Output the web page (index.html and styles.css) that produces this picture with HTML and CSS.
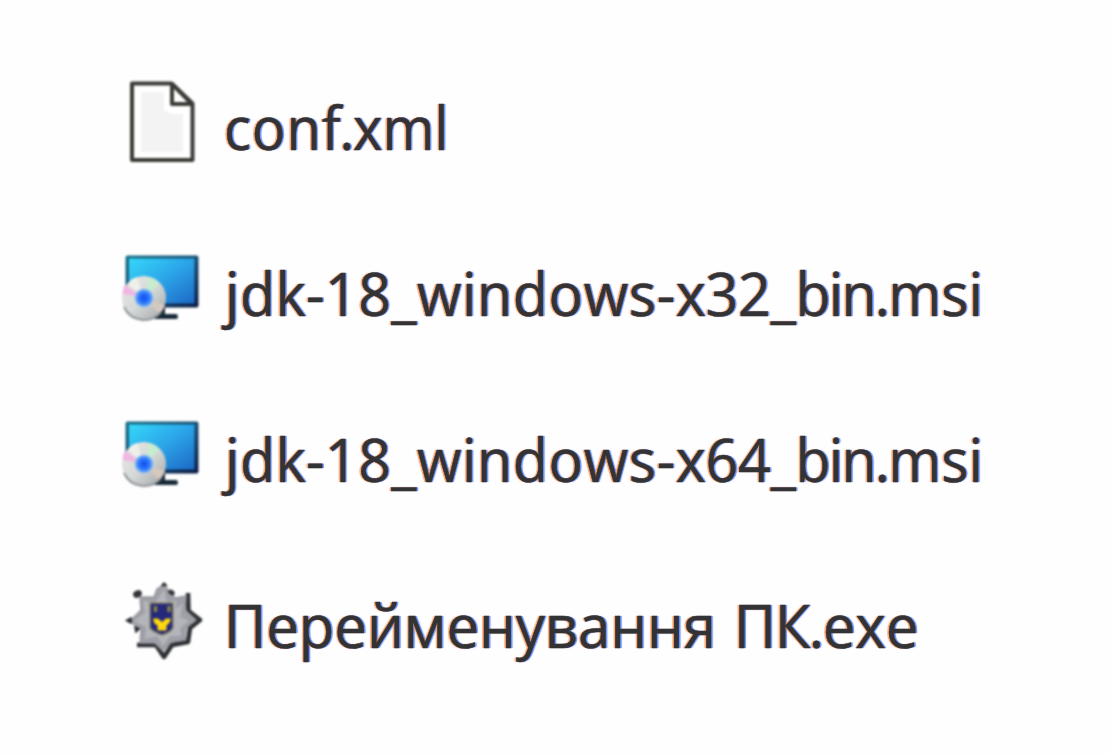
FILE: index.html
```html
<!DOCTYPE html>
<html lang="uk">
<head>
<meta charset="utf-8">
<title>Files</title>
<link rel="stylesheet" href="styles.css">
</head>
<body>
<svg class="defs" width="0" height="0" aria-hidden="true">
  <defs>
    <linearGradient id="screen" x1="0" y1="0" x2="1" y2="1">
      <stop offset="0" stop-color="#35d8fa"/><stop offset=".5" stop-color="#2ba4e8"/><stop offset="1" stop-color="#1d68c6"/>
    </linearGradient>
    <linearGradient id="frame" x1="0" y1="0" x2="1" y2="1">
      <stop offset="0" stop-color="#1c7288"/><stop offset=".5" stop-color="#174f74"/><stop offset="1" stop-color="#0c1a42"/>
    </linearGradient>
    <linearGradient id="disc" x1="0" y1="0" x2="1" y2="1">
      <stop offset="0" stop-color="#e9e9e3"/><stop offset=".5" stop-color="#d5d9d8"/><stop offset="1" stop-color="#a3a5a5"/>
    </linearGradient>
    <radialGradient id="hub">
      <stop offset="0" stop-color="#1450ee"/><stop offset=".4" stop-color="#2068fa"/><stop offset=".75" stop-color="#4a94fa"/><stop offset="1" stop-color="#a9cdec"/>
    </radialGradient>
    <symbol id="installer" viewBox="0 0 100 85">
      <rect x="15.500" y="10.500" width="73" height="52" rx="2" fill="url(#frame)"/>
      <rect x="19" y="13.500" width="65.500" height="45" fill="url(#screen)"/>
      <path d="M50 61h5v8h11q2 0 2 2.500t-2 2.500H44z" fill="#182a38"/>
      <circle cx="34" cy="53" r="22" fill="url(#disc)"/>
      <path d="M34 53 13 49q-1-5 2-9z" fill="#f0b7e3"/>
      <path d="M34 53 39 32q8 2 10 7z" fill="#c7ecd0"/>
      <path d="M34 53 49 69q4-3 6-9z" fill="#d5c8bf"/>
      <path d="M34 53 27 32q-7 2-9 7z" fill="#f0f0ea"/>
      <path d="M14 62a22 22 0 0 0 37 5" fill="none" stroke="#92979a" stroke-width="2"/>
      <circle cx="34" cy="53" r="9.500" fill="url(#hub)"/>
    </symbol>
  </defs>
</svg>
<ul class="files">
  <li class="file">
    <svg class="icon" viewBox="0 0 100 100">
      <path d="M22 12.500H61.500L82.500 32.500V89H22z" fill="#fff" stroke="#3b3a36" stroke-width="4" stroke-linejoin="round"/>
      <path d="M31 21H54V39L62 43H73V81H31z" fill="#f3f3f3"/>
      <path d="M62 13V33H82z" fill="#fff" stroke="#3b3a36" stroke-width="4" stroke-linejoin="round"/>
    </svg>
    <span class="name name-conf"><span class="base">con</span><span class="dot">f.</span>xml</span>
  </li>
  <li class="file">
    <svg class="icon installer"><use href="#installer"/></svg>
    <span class="name name-jdk"><span class="stem">jdk-18_</span><span class="platform">windows-</span><span class="arch">x32_</span><span class="suffix">bin.</span>msi</span>
  </li>
  <li class="file">
    <svg class="icon installer"><use href="#installer"/></svg>
    <span class="name name-jdk"><span class="stem">jdk-18_</span><span class="platform">windows-</span><span class="arch">x64_</span><span class="suffix">bin.</span>msi</span>
  </li>
  <li class="file">
    <svg class="icon badge" viewBox="0 0 100 100">
      <path d="M78 24 78.500 42 90 51 80 59 78 73 62 76 54 88 46 76 27 76" fill="none" stroke="#2e2f33" stroke-width="4.500" stroke-linejoin="round"/>
      <path d="M54 16 60 23 65 29 76 27 75 41 86 51 76 59 75 71 61 73 53 82 45 74 30 74 31 61 20 52 31 41 30 28 44 28 47 20z" fill="#9fa0a7" stroke="#9698a0" stroke-width="1.500" stroke-linejoin="round"/>
      <path d="M54 20 57 34 66 31 66 40 73 34 70 48 79 52 70 59 71 67 60 67 53 77 47 67 35 70 36 58 24 52 35 44 33 32 45 34z" fill="#b4b5bb"/>
      <ellipse cx="27.500" cy="25" rx="4.500" ry="3.500" fill="#333438" transform="rotate(-25 27.500 25)"/>
      <ellipse cx="61.500" cy="23.500" rx="3.500" ry="2.500" fill="#37373a" transform="rotate(35 61.500 23.500)"/>
      <path d="M51.500 17 54 14 57 17M16.500 51.500l4.500-2.500v5zM25 58l4 2-3 3z" fill="#27282c" stroke="#27282c" stroke-width="1.500"/>
      <path d="M40 34H63V59Q60 64 52 66 43 63 40 59z" fill="#25297c" stroke="#8c8765" stroke-width="1.500"/>
      <path d="M45.500 37v6M59 37v6" stroke="#8a823c" stroke-width="3.500"/>
      <path d="M43.500 50H48L52 53.500 56 50H60.500L58.500 54.500 56 56V61H48V56L45 54.500z" fill="#ffd80e" stroke="#ffd80e"/>
    </svg>
    <span class="name name-exe"><span class="first">Перейменування </span><span class="second">ПК.</span>exe</span>
  </li>
</ul>
</body>
</html>
```
FILE: styles.css
```css
body {
  margin: 0;
  background: #fefefe;
}

.defs {
  position: absolute;
}

.files {
  margin: 0;
  padding: 46px 0 0 109.5px;
  list-style: none;
}

.file {
  display: flex;
  align-items: center;
  gap: 12px;
  height: 166px;
}

.icon {
  flex: none;
  width: 100px;
  height: 100px;
  margin-top: -16px;
  filter: blur(0.8px);
}

.installer {
  height: 85px;
  margin-top: -15px;
}

.name {
  margin-top: -5px;
  color: #333335;
  font: 400 61px/83px "Open Sans", "Noto Sans", sans-serif;
  white-space: pre;
  transform-origin: left center;
  -webkit-text-stroke: 0.45px #333335;
  text-shadow: -1.8px 0 1px #ff8b45cc, 1.8px 0 1px #3f75ffcc;
}

.name-conf {
  transform: translateX(2px) scaleX(0.919);
}

.name-jdk {
  transform: translateX(3px) scaleX(0.939);
}

.name-exe {
  transform: translateX(2px) scaleX(0.954);
}

.base {
  letter-spacing: 1px;
}

.dot {
  letter-spacing: -1.2px;
}

.stem {
  letter-spacing: 0.5px;
}

.platform {
  letter-spacing: 0.7px;
}

.arch {
  letter-spacing: -0.2px;
}

.suffix {
  letter-spacing: -1.9px;
}

.first {
  letter-spacing: -0.1px;
  word-spacing: 3px;
}

.second {
  letter-spacing: -1.5px;
}
```
